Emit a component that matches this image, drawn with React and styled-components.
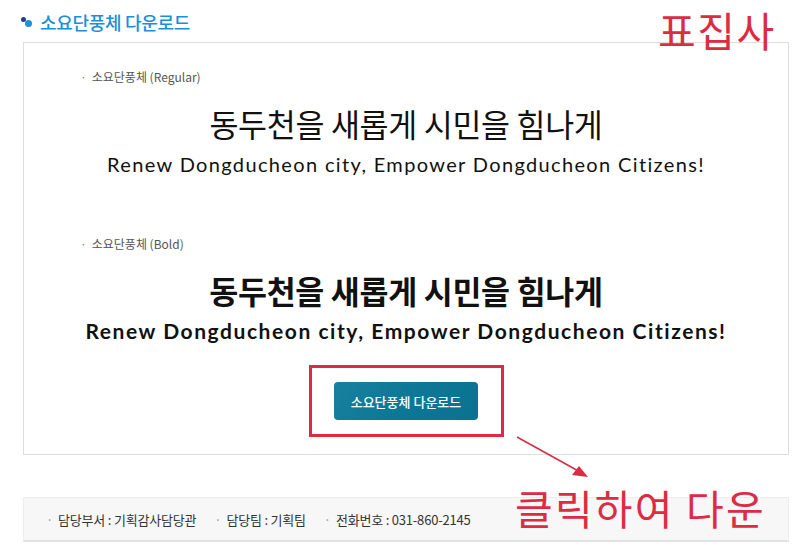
import React from 'react'
import styled, {createGlobalStyle} from 'styled-components'

const Global = createGlobalStyle`
    body {
        margin: 0;
        background: #fff;
        font-family: "Noto Sans CJK KR", "Noto Sans", sans-serif;
    }
`

const Page = styled.div`
    position: relative;
    width: 800px;
    height: 556px;
    padding: 10px 11px 0 23px;
    box-sizing: border-box;
    overflow: hidden;
`

const Title = styled.h2`
    display: flex;
    align-items: center;
    gap: 7px;
    margin: 0 0 0 -2px;
    height: 24px;
    font-size: 18px;
    font-weight: 500;
    color: #1b8fd8;
    letter-spacing: -0.3px;
`

const Dots = styled.span`
    position: relative;
    width: 12px;
    height: 12px;
    &::before, &::after {
        content: '';
        position: absolute;
        border-radius: 50%;
    }
    &::before { left: 0; top: 1px; width: 5px; height: 5px; background: #233d8c; }
    &::after { left: 4px; top: 4px; width: 7px; height: 7px; background: #1b8fd8; }
`

const Box = styled.div`
    margin-top: 8px;
    height: 413px;
    border: 1px solid #dedede;
    box-sizing: border-box;
    padding: 24px 0 0;
    display: flex;
    flex-direction: column;
    align-items: center;
`

const Sample = styled.section`
    width: 100%;
    display: flex;
    flex-direction: column;
    align-items: center;
    margin-bottom: ${p => p.gap}px;
`

const Label = styled.div`
    align-self: flex-start;
    margin-left: 56px;
    font-size: 12px;
    color: #555;
    line-height: 20px;
    &::before {
        content: '·';
        margin-right: 5px;
        color: #888;
    }
`

const Heading = styled.div`
    margin-top: 16px;
    font-size: 31.5px;
    font-weight: ${p => (p.bold ? 700 : 400)};
    color: #111;
    line-height: 40px;
    letter-spacing: -0.3px;
`

const Slogan = styled.div`
    margin-top: 6px;
    font-family: "Lato", "Noto Sans", sans-serif;
    font-size: ${p => (p.bold ? 21 : 20)}px;
    font-weight: ${p => (p.bold ? 700 : 400)};
    color: #111;
    line-height: 30px;
    letter-spacing: ${p => (p.bold ? 1.55 : 1.35)}px;
    white-space: nowrap;
`

const Highlight = styled.div`
    margin-top: 19px;
    width: 195px;
    height: 72px;
    border: 3px solid #dd2a45;
    box-sizing: border-box;
    display: flex;
    align-items: center;
    justify-content: center;
`

const DownloadButton = styled.button`
    width: 144px;
    height: 38px;
    border: 0;
    border-radius: 4px;
    background: linear-gradient(135deg, #17819f 0%, #0d7796 50%, #0a7290 100%);
    color: #fff;
    font-family: inherit;
    font-size: 13px;
    font-weight: 500;
    cursor: pointer;
`

const Footer = styled.div`
    margin-top: 42px;
    height: 45px;
    background: #f7f7f7;
    border: 1px solid #ececec;
    border-bottom: 2px solid #e2e2e2;
    box-sizing: border-box;
    display: flex;
    align-items: center;
    gap: 18px;
    padding-left: 22px;
    font-size: 13px;
    letter-spacing: -0.2px;
    color: #333;
`

const FooterItem = styled.span`
    &::before {
        content: '·';
        margin-right: 5px;
        color: #999;
    }
`

const Note = styled.div`
    position: absolute;
    font-size: 41px;
    color: #dc2c44;
    line-height: 50px;
    white-space: nowrap;
    letter-spacing: ${p => p.spacing}px;
`

const Arrow = styled.svg`
    position: absolute;
    left: 512px;
    top: 432px;
`

const App = () => {
    return (
        <>
            <Global />
            <Page>
                <Title><Dots />소요단풍체 다운로드</Title>
                <Box>
                    <Sample gap={55}>
                        <Label>소요단풍체 (Regular)</Label>
                        <Heading>동두천을 새롭게 시민을 힘나게</Heading>
                        <Slogan>Renew Dongducheon city, Empower Dongducheon Citizens!</Slogan>
                    </Sample>
                    <Sample gap={0}>
                        <Label>소요단풍체 (Bold)</Label>
                        <Heading bold>동두천을 새롭게 시민을 힘나게</Heading>
                        <Slogan bold>Renew Dongducheon city, Empower Dongducheon Citizens!</Slogan>
                        <Highlight>
                            <DownloadButton>소요단풍체 다운로드</DownloadButton>
                        </Highlight>
                    </Sample>
                </Box>
                <Footer>
                    <FooterItem>담당부서 : 기획감사담당관</FooterItem>
                    <FooterItem>담당팀 : 기획팀</FooterItem>
                    <FooterItem>전화번호 : 031-860-2145</FooterItem>
                </Footer>
                <Note spacing={1.5} style={{left: 658, top: 4}}>표집사</Note>
                <Note spacing={2.2} style={{left: 515, top: 482}}>클릭하여 다운</Note>
                <Arrow width="80" height="50" viewBox="0 0 80 50">
                    <line x1="5" y1="5" x2="70" y2="41" stroke="#dc2c44" strokeWidth="1.6" />
                    <polygon points="76,45 60,43 67,34" fill="#dc2c44" />
                </Arrow>
            </Page>
        </>
    )
}

export default App
